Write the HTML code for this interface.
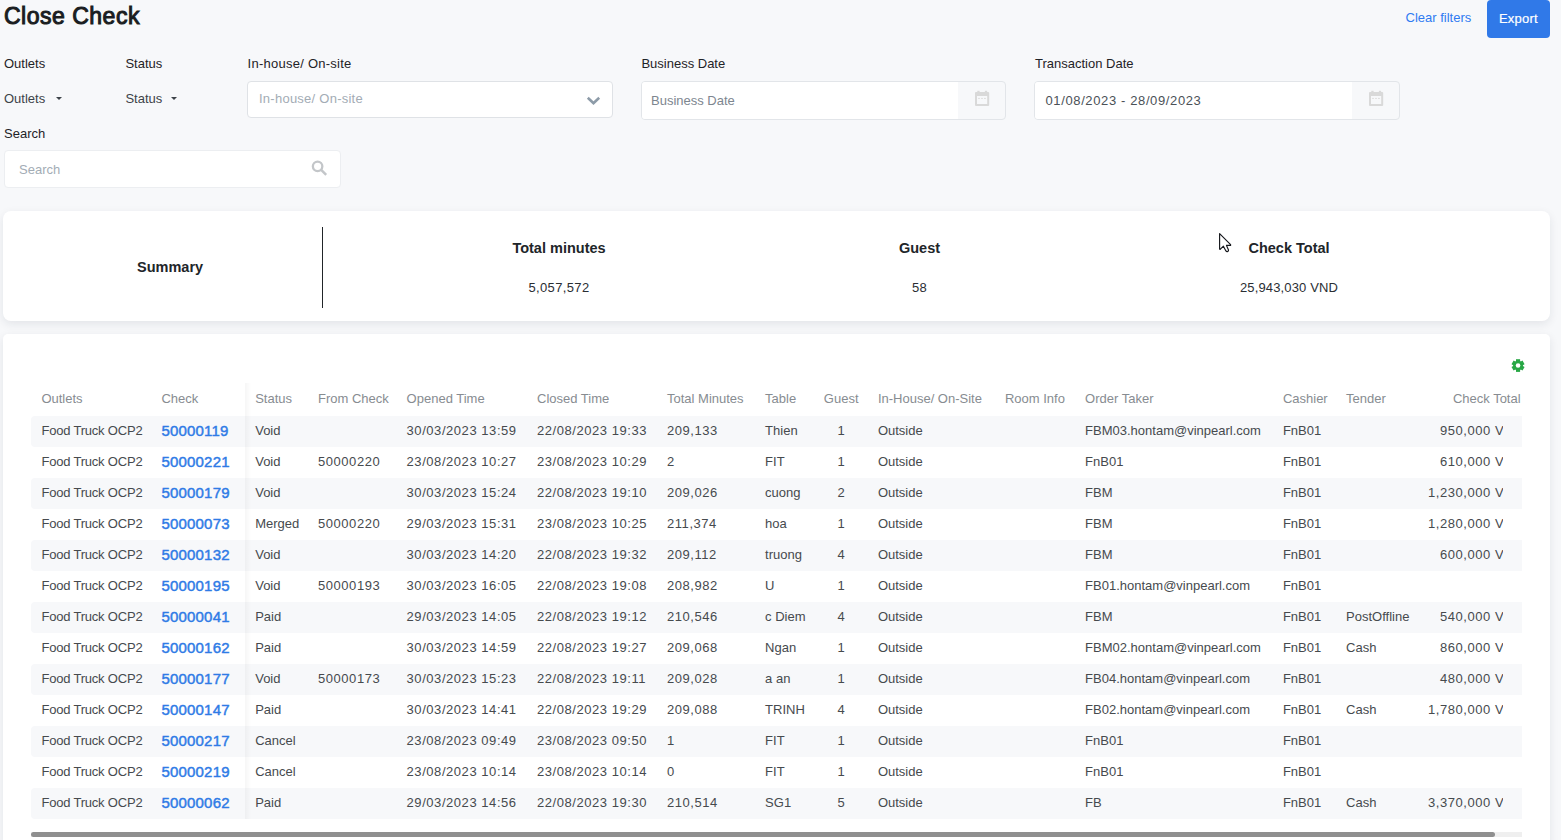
<!DOCTYPE html>
<html><head><meta charset="utf-8">
<style>
*{box-sizing:border-box;margin:0;padding:0}
html,body{width:1561px;height:840px;overflow:hidden}
body{background:#f7f8fa;font-family:"Liberation Sans",sans-serif;color:#212529;position:relative}
.a{position:absolute;white-space:nowrap;line-height:1}
.lbl{font-size:13px;color:#1f2327}
.title{font-size:23px;font-weight:400;color:#1a1d21;-webkit-text-stroke:1px #1a1d21;letter-spacing:.5px}
.btn{position:absolute;left:1487px;top:0;width:63px;height:38px;background:#3079e8;border-radius:4px}
.box{position:absolute;background:#fff;border:1px solid #dfe2e6;border-radius:4px}
.ph{font-size:13px;color:#a3acb5}
.card{position:absolute;left:3px;width:1547px;background:#fff;border-radius:8px;box-shadow:0 3px 10px rgba(20,30,50,.09)}
.sh{font-size:14.5px;font-weight:700;color:#212529}
.sv{font-size:13px;color:#2a2e33;letter-spacing:.35px}
.th{font-size:13px;color:#878c91}
.row{position:absolute;left:31px;width:1490.5px;height:31px;border-radius:4px 0 0 4px}
.row.g{background:#f7f8fa}
.td{font-size:13px;color:#464a4e}
.ft{letter-spacing:-.2px}
.num{letter-spacing:.55px}
.ck{font-size:15px;font-weight:400;color:#2f7be6;letter-spacing:.2px;-webkit-text-stroke:.45px #2f7be6}
</style></head><body>
<div class="a title" style="left:4px;top:5px">Close Check</div>
<div class="a" style="left:1405.5px;top:10.7px;font-size:13px;color:#2f7bf2">Clear filters</div>
<div class="btn"><div class="a" style="left:12px;top:12px;font-size:13px;color:#fff;letter-spacing:.2px;-webkit-text-stroke:.2px #fff">Export</div></div>

<div class="a lbl" style="left:4px;top:57px">Outlets</div>
<div class="a lbl" style="left:125.4px;top:57px">Status</div>
<div class="a lbl" style="left:247.6px;top:57px;letter-spacing:.25px">In-house/ On-site</div>
<div class="a lbl" style="left:641.4px;top:57px">Business Date</div>
<div class="a lbl" style="left:1035px;top:57px">Transaction Date</div>

<div class="a lbl" style="left:4px;top:92px;color:#3d4349">Outlets</div>
<div class="a" style="left:56px;top:96.5px;width:0;height:0;border-left:3.5px solid transparent;border-right:3.5px solid transparent;border-top:3.5px solid #3d4349"></div>
<div class="a lbl" style="left:125.4px;top:92px;color:#3d4349">Status</div>
<div class="a" style="left:171px;top:96.5px;width:0;height:0;border-left:3.5px solid transparent;border-right:3.5px solid transparent;border-top:3.5px solid #3d4349"></div>

<div class="box" style="left:247px;top:81px;width:365.5px;height:36.5px">
  <div class="a ph" style="left:11px;top:10px;letter-spacing:.25px">In-house/ On-site</div>
  <svg class="a" style="left:337.5px;top:13.5px" width="16" height="10" viewBox="0 0 16 10"><path d="M1.8 1.8 L7.5 7.3 L13.2 1.8" fill="none" stroke="#8d9ba8" stroke-width="2.6"/></svg>
</div>

<div class="box" style="left:641px;top:81px;width:365px;height:39px;border-color:#e2e5e9;background:#f7f8fa">
  <div class="a" style="left:0;top:0;width:316px;height:37px;background:#fff;border-radius:3px 0 0 3px"></div>
  <div class="a ph" style="left:9px;top:12px;color:#7d868f">Business Date</div>
  <svg class="a" style="left:333px;top:8px" width="15" height="16" viewBox="0 0 15 16"><path fill="#d9d9d9" fill-rule="evenodd" d="M1 1.9h12.2a1 1 0 0 1 1 1V14.9a1 1 0 0 1-1 1H1a1 1 0 0 1-1-1V2.9a1 1 0 0 1 1-1z M2 5.9v8h10.2v-8z"/><rect x="2.3" y="0.8" width="2.3" height="1.6" fill="#d9d9d9"/><rect x="9.9" y="0.8" width="2.2" height="1.6" fill="#d9d9d9"/><rect x="3.2" y="7.9" width="1.6" height="1.1" fill="#dcdcdc"/><rect x="6.2" y="7.9" width="1.6" height="1.1" fill="#dcdcdc"/><rect x="9.1" y="7.9" width="1.7" height="1.1" fill="#dcdcdc"/></svg>
</div>

<div class="box" style="left:1034px;top:81px;width:365.5px;height:39px;border-color:#e2e5e9;background:#f7f8fa">
  <div class="a" style="left:0;top:0;width:317px;height:37px;background:#fff;border-radius:3px 0 0 3px"></div>
  <div class="a" style="left:10.5px;top:12px;font-size:13px;color:#4b5157;letter-spacing:.62px">01/08/2023 - 28/09/2023</div>
  <svg class="a" style="left:334px;top:8px" width="15" height="16" viewBox="0 0 15 16"><path fill="#d9d9d9" fill-rule="evenodd" d="M1 1.9h12.2a1 1 0 0 1 1 1V14.9a1 1 0 0 1-1 1H1a1 1 0 0 1-1-1V2.9a1 1 0 0 1 1-1z M2 5.9v8h10.2v-8z"/><rect x="2.3" y="0.8" width="2.3" height="1.6" fill="#d9d9d9"/><rect x="9.9" y="0.8" width="2.2" height="1.6" fill="#d9d9d9"/><rect x="3.2" y="7.9" width="1.6" height="1.1" fill="#dcdcdc"/><rect x="6.2" y="7.9" width="1.6" height="1.1" fill="#dcdcdc"/><rect x="9.1" y="7.9" width="1.7" height="1.1" fill="#dcdcdc"/></svg>
</div>

<div class="a lbl" style="left:4px;top:127px">Search</div>
<div class="box" style="left:4px;top:150px;width:336.5px;height:37.5px;border-color:#eceef1">
  <div class="a ph" style="left:14px;top:11.5px">Search</div>
  <svg class="a" style="left:305px;top:8px" width="18" height="18" viewBox="0 0 18 18"><circle cx="7.6" cy="7.3" r="4.75" fill="none" stroke="#c3c6c9" stroke-width="2.3"/><path d="M10.9 10.7 L16.2 15.9" stroke="#c3c6c9" stroke-width="2.5"/></svg>
</div>

<!-- summary card -->
<div class="card" style="top:210.7px;height:110.3px">
  <div class="a sh" style="left:134px;top:49px">Summary</div>
  <div class="a" style="left:319px;top:16.5px;width:1px;height:81px;background:#212529"></div>
  <div class="a sh" style="left:456px;top:30.5px;width:200px;text-align:center">Total minutes</div>
  <div class="a sv" style="left:456px;top:70px;width:200px;text-align:center">5,057,572</div>
  <div class="a sh" style="left:816.5px;top:30.5px;width:200px;text-align:center">Guest</div>
  <div class="a sv" style="left:816.5px;top:70px;width:200px;text-align:center">58</div>
  <div class="a sh" style="left:1186px;top:30.5px;width:200px;text-align:center">Check Total</div>
  <div class="a sv" style="left:1186px;top:70px;width:200px;text-align:center;letter-spacing:.15px">25,943,030 VND</div>
</div>
<svg class="a" style="left:1210px;top:225px" width="30" height="35" viewBox="0 0 30 35"><path d="M9.6 8.6 L9.6 24 Q9.7 24.6 10.4 24.2 L13.4 21.2 L15.9 25.9 Q16.6 26.9 17.8 26.4 Q18.8 25.9 18.5 24.9 L16.5 20.4 L20.6 20.4 L20.6 19.6 Z" fill="#fff" stroke="#15171c" stroke-width="1.15" stroke-linejoin="round"/></svg>

<!-- table card -->
<div class="card" id="tc" style="top:334px;height:520px;border-radius:5px">
</div>
<div class="row" style="top:384px;height:31px;background:#fff"></div>
<div class="row g" style="top:416.0px"></div>
<div class="row g" style="top:478.0px"></div>
<div class="row g" style="top:540.0px"></div>
<div class="row g" style="top:602.0px"></div>
<div class="row g" style="top:664.0px"></div>
<div class="row g" style="top:726.0px"></div>
<div class="row g" style="top:788.0px"></div>
<div class="a" style="left:245px;top:382.5px;width:6px;height:436.5px;background:linear-gradient(90deg,rgba(0,0,0,.035),rgba(0,0,0,0))"></div>
<div class="a th" style="left:41.4px;top:391.90px">Outlets</div>
<div class="a th" style="left:161.4px;top:391.90px">Check</div>
<div class="a th" style="left:255.2px;top:391.90px">Status</div>
<div class="a th" style="left:318px;top:391.90px">From Check</div>
<div class="a th" style="left:406.6px;top:391.90px">Opened Time</div>
<div class="a th" style="left:537px;top:391.90px">Closed Time</div>
<div class="a th" style="left:667px;top:391.90px">Total Minutes</div>
<div class="a th" style="left:765.1px;top:391.90px">Table</div>
<div class="a th" style="left:801.2px;top:391.90px;width:80px;text-align:center">Guest</div>
<div class="a th" style="left:877.9px;top:391.90px">In-House/ On-Site</div>
<div class="a th" style="left:1004.9px;top:391.90px">Room Info</div>
<div class="a th" style="left:1085.1px;top:391.90px">Order Taker</div>
<div class="a th" style="left:1282.9px;top:391.90px">Cashier</div>
<div class="a th" style="left:1346.1px;top:391.90px">Tender</div>
<div class="a th" style="left:1420.6px;top:391.90px;width:100px;text-align:right">Check Total</div>
<div class="a td ft" style="left:41.4px;top:424.00px">Food Truck OCP2</div>
<div class="a ck" style="left:161.4px;top:423.00px">50000119</div>
<div class="a td" style="left:255.2px;top:424.00px">Void</div>
<div class="a td num" style="left:406.6px;top:424.00px">30/03/2023 13:59</div>
<div class="a td num" style="left:537px;top:424.00px">22/08/2023 19:33</div>
<div class="a td num" style="left:667px;top:424.00px">209,133</div>
<div class="a td" style="left:765.1px;top:424.00px">Thien</div>
<div class="a td" style="left:801.2px;top:424.00px;width:80px;text-align:center">1</div>
<div class="a td" style="left:877.9px;top:424.00px">Outside</div>
<div class="a td" style="left:1085.1px;top:424.00px">FBM03.hontam@vinpearl.com</div>
<div class="a td" style="left:1282.9px;top:424.00px">FnB01</div>
<div class="a" style="left:1403px;top:416.0px;width:100px;height:31px;overflow:hidden"><div class="a td num" style="right:-21px;top:8.00px">950,000 VND</div></div>
<div class="a td ft" style="left:41.4px;top:455.00px">Food Truck OCP2</div>
<div class="a ck" style="left:161.4px;top:454.00px">50000221</div>
<div class="a td" style="left:255.2px;top:455.00px">Void</div>
<div class="a td num" style="left:318px;top:455.00px">50000220</div>
<div class="a td num" style="left:406.6px;top:455.00px">23/08/2023 10:27</div>
<div class="a td num" style="left:537px;top:455.00px">23/08/2023 10:29</div>
<div class="a td num" style="left:667px;top:455.00px">2</div>
<div class="a td" style="left:765.1px;top:455.00px">FIT</div>
<div class="a td" style="left:801.2px;top:455.00px;width:80px;text-align:center">1</div>
<div class="a td" style="left:877.9px;top:455.00px">Outside</div>
<div class="a td" style="left:1085.1px;top:455.00px">FnB01</div>
<div class="a td" style="left:1282.9px;top:455.00px">FnB01</div>
<div class="a" style="left:1403px;top:447.0px;width:100px;height:31px;overflow:hidden"><div class="a td num" style="right:-21px;top:8.00px">610,000 VND</div></div>
<div class="a td ft" style="left:41.4px;top:486.00px">Food Truck OCP2</div>
<div class="a ck" style="left:161.4px;top:485.00px">50000179</div>
<div class="a td" style="left:255.2px;top:486.00px">Void</div>
<div class="a td num" style="left:406.6px;top:486.00px">30/03/2023 15:24</div>
<div class="a td num" style="left:537px;top:486.00px">22/08/2023 19:10</div>
<div class="a td num" style="left:667px;top:486.00px">209,026</div>
<div class="a td" style="left:765.1px;top:486.00px">cuong</div>
<div class="a td" style="left:801.2px;top:486.00px;width:80px;text-align:center">2</div>
<div class="a td" style="left:877.9px;top:486.00px">Outside</div>
<div class="a td" style="left:1085.1px;top:486.00px">FBM</div>
<div class="a td" style="left:1282.9px;top:486.00px">FnB01</div>
<div class="a" style="left:1403px;top:478.0px;width:100px;height:31px;overflow:hidden"><div class="a td num" style="right:-21px;top:8.00px">1,230,000 VND</div></div>
<div class="a td ft" style="left:41.4px;top:517.00px">Food Truck OCP2</div>
<div class="a ck" style="left:161.4px;top:516.00px">50000073</div>
<div class="a td" style="left:255.2px;top:517.00px">Merged</div>
<div class="a td num" style="left:318px;top:517.00px">50000220</div>
<div class="a td num" style="left:406.6px;top:517.00px">29/03/2023 15:31</div>
<div class="a td num" style="left:537px;top:517.00px">23/08/2023 10:25</div>
<div class="a td num" style="left:667px;top:517.00px">211,374</div>
<div class="a td" style="left:765.1px;top:517.00px">hoa</div>
<div class="a td" style="left:801.2px;top:517.00px;width:80px;text-align:center">1</div>
<div class="a td" style="left:877.9px;top:517.00px">Outside</div>
<div class="a td" style="left:1085.1px;top:517.00px">FBM</div>
<div class="a td" style="left:1282.9px;top:517.00px">FnB01</div>
<div class="a" style="left:1403px;top:509.0px;width:100px;height:31px;overflow:hidden"><div class="a td num" style="right:-21px;top:8.00px">1,280,000 VND</div></div>
<div class="a td ft" style="left:41.4px;top:548.00px">Food Truck OCP2</div>
<div class="a ck" style="left:161.4px;top:547.00px">50000132</div>
<div class="a td" style="left:255.2px;top:548.00px">Void</div>
<div class="a td num" style="left:406.6px;top:548.00px">30/03/2023 14:20</div>
<div class="a td num" style="left:537px;top:548.00px">22/08/2023 19:32</div>
<div class="a td num" style="left:667px;top:548.00px">209,112</div>
<div class="a td" style="left:765.1px;top:548.00px">truong</div>
<div class="a td" style="left:801.2px;top:548.00px;width:80px;text-align:center">4</div>
<div class="a td" style="left:877.9px;top:548.00px">Outside</div>
<div class="a td" style="left:1085.1px;top:548.00px">FBM</div>
<div class="a td" style="left:1282.9px;top:548.00px">FnB01</div>
<div class="a" style="left:1403px;top:540.0px;width:100px;height:31px;overflow:hidden"><div class="a td num" style="right:-21px;top:8.00px">600,000 VND</div></div>
<div class="a td ft" style="left:41.4px;top:579.00px">Food Truck OCP2</div>
<div class="a ck" style="left:161.4px;top:578.00px">50000195</div>
<div class="a td" style="left:255.2px;top:579.00px">Void</div>
<div class="a td num" style="left:318px;top:579.00px">50000193</div>
<div class="a td num" style="left:406.6px;top:579.00px">30/03/2023 16:05</div>
<div class="a td num" style="left:537px;top:579.00px">22/08/2023 19:08</div>
<div class="a td num" style="left:667px;top:579.00px">208,982</div>
<div class="a td" style="left:765.1px;top:579.00px">U</div>
<div class="a td" style="left:801.2px;top:579.00px;width:80px;text-align:center">1</div>
<div class="a td" style="left:877.9px;top:579.00px">Outside</div>
<div class="a td" style="left:1085.1px;top:579.00px">FB01.hontam@vinpearl.com</div>
<div class="a td" style="left:1282.9px;top:579.00px">FnB01</div>
<div class="a td ft" style="left:41.4px;top:610.00px">Food Truck OCP2</div>
<div class="a ck" style="left:161.4px;top:609.00px">50000041</div>
<div class="a td" style="left:255.2px;top:610.00px">Paid</div>
<div class="a td num" style="left:406.6px;top:610.00px">29/03/2023 14:05</div>
<div class="a td num" style="left:537px;top:610.00px">22/08/2023 19:12</div>
<div class="a td num" style="left:667px;top:610.00px">210,546</div>
<div class="a td" style="left:765.1px;top:610.00px">c Diem</div>
<div class="a td" style="left:801.2px;top:610.00px;width:80px;text-align:center">4</div>
<div class="a td" style="left:877.9px;top:610.00px">Outside</div>
<div class="a td" style="left:1085.1px;top:610.00px">FBM</div>
<div class="a td" style="left:1282.9px;top:610.00px">FnB01</div>
<div class="a td" style="left:1346.1px;top:610.00px">PostOffline</div>
<div class="a" style="left:1403px;top:602.0px;width:100px;height:31px;overflow:hidden"><div class="a td num" style="right:-21px;top:8.00px">540,000 VND</div></div>
<div class="a td ft" style="left:41.4px;top:641.00px">Food Truck OCP2</div>
<div class="a ck" style="left:161.4px;top:640.00px">50000162</div>
<div class="a td" style="left:255.2px;top:641.00px">Paid</div>
<div class="a td num" style="left:406.6px;top:641.00px">30/03/2023 14:59</div>
<div class="a td num" style="left:537px;top:641.00px">22/08/2023 19:27</div>
<div class="a td num" style="left:667px;top:641.00px">209,068</div>
<div class="a td" style="left:765.1px;top:641.00px">Ngan</div>
<div class="a td" style="left:801.2px;top:641.00px;width:80px;text-align:center">1</div>
<div class="a td" style="left:877.9px;top:641.00px">Outside</div>
<div class="a td" style="left:1085.1px;top:641.00px">FBM02.hontam@vinpearl.com</div>
<div class="a td" style="left:1282.9px;top:641.00px">FnB01</div>
<div class="a td" style="left:1346.1px;top:641.00px">Cash</div>
<div class="a" style="left:1403px;top:633.0px;width:100px;height:31px;overflow:hidden"><div class="a td num" style="right:-21px;top:8.00px">860,000 VND</div></div>
<div class="a td ft" style="left:41.4px;top:672.00px">Food Truck OCP2</div>
<div class="a ck" style="left:161.4px;top:671.00px">50000177</div>
<div class="a td" style="left:255.2px;top:672.00px">Void</div>
<div class="a td num" style="left:318px;top:672.00px">50000173</div>
<div class="a td num" style="left:406.6px;top:672.00px">30/03/2023 15:23</div>
<div class="a td num" style="left:537px;top:672.00px">22/08/2023 19:11</div>
<div class="a td num" style="left:667px;top:672.00px">209,028</div>
<div class="a td" style="left:765.1px;top:672.00px">a an</div>
<div class="a td" style="left:801.2px;top:672.00px;width:80px;text-align:center">1</div>
<div class="a td" style="left:877.9px;top:672.00px">Outside</div>
<div class="a td" style="left:1085.1px;top:672.00px">FB04.hontam@vinpearl.com</div>
<div class="a td" style="left:1282.9px;top:672.00px">FnB01</div>
<div class="a" style="left:1403px;top:664.0px;width:100px;height:31px;overflow:hidden"><div class="a td num" style="right:-21px;top:8.00px">480,000 VND</div></div>
<div class="a td ft" style="left:41.4px;top:703.00px">Food Truck OCP2</div>
<div class="a ck" style="left:161.4px;top:702.00px">50000147</div>
<div class="a td" style="left:255.2px;top:703.00px">Paid</div>
<div class="a td num" style="left:406.6px;top:703.00px">30/03/2023 14:41</div>
<div class="a td num" style="left:537px;top:703.00px">22/08/2023 19:29</div>
<div class="a td num" style="left:667px;top:703.00px">209,088</div>
<div class="a td" style="left:765.1px;top:703.00px">TRINH</div>
<div class="a td" style="left:801.2px;top:703.00px;width:80px;text-align:center">4</div>
<div class="a td" style="left:877.9px;top:703.00px">Outside</div>
<div class="a td" style="left:1085.1px;top:703.00px">FB02.hontam@vinpearl.com</div>
<div class="a td" style="left:1282.9px;top:703.00px">FnB01</div>
<div class="a td" style="left:1346.1px;top:703.00px">Cash</div>
<div class="a" style="left:1403px;top:695.0px;width:100px;height:31px;overflow:hidden"><div class="a td num" style="right:-21px;top:8.00px">1,780,000 VND</div></div>
<div class="a td ft" style="left:41.4px;top:734.00px">Food Truck OCP2</div>
<div class="a ck" style="left:161.4px;top:733.00px">50000217</div>
<div class="a td" style="left:255.2px;top:734.00px">Cancel</div>
<div class="a td num" style="left:406.6px;top:734.00px">23/08/2023 09:49</div>
<div class="a td num" style="left:537px;top:734.00px">23/08/2023 09:50</div>
<div class="a td num" style="left:667px;top:734.00px">1</div>
<div class="a td" style="left:765.1px;top:734.00px">FIT</div>
<div class="a td" style="left:801.2px;top:734.00px;width:80px;text-align:center">1</div>
<div class="a td" style="left:877.9px;top:734.00px">Outside</div>
<div class="a td" style="left:1085.1px;top:734.00px">FnB01</div>
<div class="a td" style="left:1282.9px;top:734.00px">FnB01</div>
<div class="a td ft" style="left:41.4px;top:765.00px">Food Truck OCP2</div>
<div class="a ck" style="left:161.4px;top:764.00px">50000219</div>
<div class="a td" style="left:255.2px;top:765.00px">Cancel</div>
<div class="a td num" style="left:406.6px;top:765.00px">23/08/2023 10:14</div>
<div class="a td num" style="left:537px;top:765.00px">23/08/2023 10:14</div>
<div class="a td num" style="left:667px;top:765.00px">0</div>
<div class="a td" style="left:765.1px;top:765.00px">FIT</div>
<div class="a td" style="left:801.2px;top:765.00px;width:80px;text-align:center">1</div>
<div class="a td" style="left:877.9px;top:765.00px">Outside</div>
<div class="a td" style="left:1085.1px;top:765.00px">FnB01</div>
<div class="a td" style="left:1282.9px;top:765.00px">FnB01</div>
<div class="a td ft" style="left:41.4px;top:796.00px">Food Truck OCP2</div>
<div class="a ck" style="left:161.4px;top:795.00px">50000062</div>
<div class="a td" style="left:255.2px;top:796.00px">Paid</div>
<div class="a td num" style="left:406.6px;top:796.00px">29/03/2023 14:56</div>
<div class="a td num" style="left:537px;top:796.00px">22/08/2023 19:30</div>
<div class="a td num" style="left:667px;top:796.00px">210,514</div>
<div class="a td" style="left:765.1px;top:796.00px">SG1</div>
<div class="a td" style="left:801.2px;top:796.00px;width:80px;text-align:center">5</div>
<div class="a td" style="left:877.9px;top:796.00px">Outside</div>
<div class="a td" style="left:1085.1px;top:796.00px">FB</div>
<div class="a td" style="left:1282.9px;top:796.00px">FnB01</div>
<div class="a td" style="left:1346.1px;top:796.00px">Cash</div>
<div class="a" style="left:1403px;top:788.0px;width:100px;height:31px;overflow:hidden"><div class="a td num" style="right:-21px;top:8.00px">3,370,000 VND</div></div>
<svg class="a" style="left:1511px;top:358.5px" width="14" height="14" viewBox="0 0 14 14"><g transform="translate(7.05 6.55)" fill="#28a745"><circle r="4.9"/><rect x="-2.05" y="-6.35" width="4.1" height="12.7"/><rect x="-2.05" y="-6.35" width="4.1" height="12.7" transform="rotate(60)"/><rect x="-2.05" y="-6.35" width="4.1" height="12.7" transform="rotate(120)"/><circle r="2.3" fill="#fff"/></g></svg>
<div class="a" style="left:31px;top:832px;width:1490.5px;height:5px;background:#efefef"></div>
<div class="a" style="left:31px;top:832px;width:1464px;height:5px;background:#8f8f8f;border-radius:3px"></div>
</body></html>
